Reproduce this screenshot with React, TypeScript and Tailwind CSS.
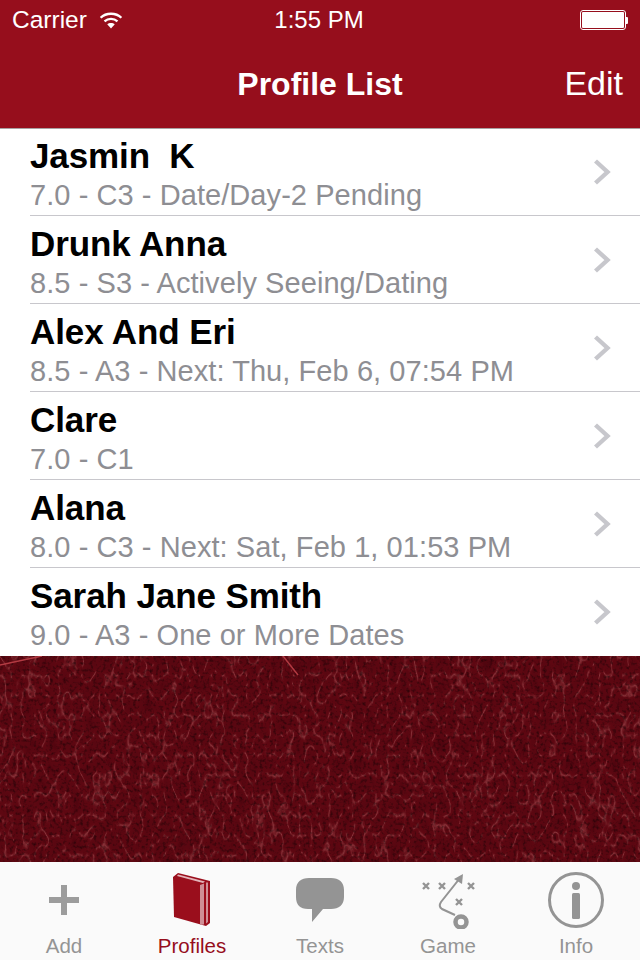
const profiles = [
  { name: 'Jasmin\u00a0\u00a0K', detail: '7.0 - C3 - Date/Day-2 Pending' },
  { name: 'Drunk Anna', detail: '8.5 - S3 - Actively Seeing/Dating' },
  { name: 'Alex And Eri', detail: '8.5 - A3 - Next: Thu, Feb 6, 07:54 PM' },
  { name: 'Clare', detail: '7.0 - C1' },
  { name: 'Alana', detail: '8.0 - C3 - Next: Sat, Feb 1, 01:53 PM' },
  { name: 'Sarah Jane Smith', detail: '9.0 - A3 - One or More Dates' },
];

const Wifi = () => (
  <svg width="24" height="18" viewBox="0 0 26 20" fill="none" stroke="white">
    <path d="M1.5 7.5C7.5 1.6 18.5 1.6 24.5 7.5" strokeWidth="2.6" />
    <path d="M5.8 11.4C9.8 7.8 16.2 7.8 20.2 11.4" strokeWidth="2.6" />
    <path d="M13 19.5L8.8 14.8C11 13 15 13 17.2 14.8Z" fill="white" stroke="none" />
  </svg>
);

const Battery = () => (
  <div className="flex items-center">
    <div className="w-[46px] h-[20px] rounded-[3px] border border-white p-[1px] flex">
      <div className="flex-1 bg-white rounded-[1px]" />
    </div>
    <div className="w-[2px] h-[7px] bg-white rounded-r-[1px]" />
  </div>
);

const Chevron = () => (
  <svg width="18" height="26" viewBox="0 0 18 26" fill="none" stroke="#c7c7cc" strokeWidth="4.4">
    <path d="M2.5 2L14.5 13L2.5 24" />
  </svg>
);

const Leather = () => (
  <svg width="640" height="206" className="block">
    <defs>
      <filter id="leather" x="0" y="0" width="100%" height="100%" colorInterpolationFilters="sRGB">
        <feTurbulence type="turbulence" baseFrequency="0.085 0.05" numOctaves="2" seed="7" />
        <feColorMatrix
          type="matrix"
          values="0 0 0 1 0
                  0 0 0 1 0
                  0 0 0 1 0
                  0 0 0 0 1"
        />
        <feComponentTransfer result="veins">
          <feFuncR type="table" tableValues="0.54 0.46 0.39 0.37 0.37 0.36 0.36 0.35 0.35 0.34 0.33 0.32 0.31 0.30 0.30 0.30" />
          <feFuncG type="table" tableValues="0.20 0.12 0.05 0.03 0.03 0.03 0.03 0.03 0.03 0.02 0.02 0.02 0.02 0.02 0.02 0.02" />
          <feFuncB type="table" tableValues="0.23 0.15 0.09 0.07 0.07 0.07 0.07 0.07 0.07 0.06 0.06 0.06 0.06 0.06 0.06 0.06" />
        </feComponentTransfer>
        <feTurbulence type="fractalNoise" baseFrequency="0.3" numOctaves="2" seed="3" />
        <feColorMatrix
          type="matrix"
          values="1.2 0 0 0 0.38
                  1.2 0 0 0 0.38
                  1.2 0 0 0 0.38
                  0 0 0 0 1"
          result="grain"
        />
        <feBlend in="veins" in2="grain" mode="multiply" />
      </filter>
    </defs>
    <rect width="640" height="206" filter="url(#leather)" />
    <path d="M0 9L42 0" stroke="#b33a42" strokeWidth="1.5" />
    <path d="M283 0L298 19" stroke="#b33a42" strokeWidth="1.5" />
  </svg>
);

const BookIcon = () => (
  <svg width="38" height="54" viewBox="0 0 38 54">
    <path d="M0 4L5 0L37 8V50L33 53L1 44Z" fill="#9a0e1c" />
    <path d="M4 3L5 1.5L32 8.5L30 10Z" fill="#e3b4b9" />
    <path d="M27 12L31 10.5V51.5L27 52Z" fill="#cf8f96" />
    <path d="M33 9.5H35V49L33 50.5Z" fill="#cf8f96" />
  </svg>
);

const BubbleIcon = () => (
  <svg width="50" height="46" viewBox="0 0 50 46">
    <path
      d="M14 1H36C44 1 49 5 49 13V20C49 28 44 32 36 32H28L17 45V32H13C5 32 1 28 1 20V13C1 5 6 1 14 1Z"
      fill="#949494"
    />
  </svg>
);

const PlayIcon = () => (
  <svg width="58" height="58" viewBox="0 0 58 58" fill="none" stroke="#949494">
    <g strokeWidth="2.4">
      <path d="M4 12L10 18M10 12L4 18" />
      <path d="M20 12L26 18M26 12L20 18" />
      <path d="M49 12L55 18M55 12L49 18" />
      <path d="M37 28L43 34M43 28L37 34" />
    </g>
    <path d="M41 7L22 31C20 34 20 36 23 38L36 44" strokeWidth="2" />
    <path d="M44 3L43 13L35 8Z" fill="#949494" stroke="none" />
    <circle cx="42" cy="51" r="5.5" strokeWidth="4.5" />
  </svg>
);

const InfoIcon = () => (
  <svg width="56" height="56" viewBox="0 0 56 56" fill="none" stroke="#949494">
    <circle cx="28" cy="28" r="26.5" strokeWidth="3" />
    <circle cx="28" cy="14" r="4" fill="#949494" stroke="none" />
    <rect x="24" y="21" width="8" height="26" rx="1.5" fill="#949494" stroke="none" />
  </svg>
);

const tabs = [
  {
    label: 'Add',
    icon: (
      <svg width="30" height="30" viewBox="0 0 30 30">
        <path d="M12 0H18V12H30V18H18V30H12V18H0V12H12Z" fill="#9c9c9c" />
      </svg>
    ),
  },
  { label: 'Profiles', icon: <BookIcon />, active: true },
  { label: 'Texts', icon: <BubbleIcon /> },
  { label: 'Game', icon: <PlayIcon /> },
  { label: 'Info', icon: <InfoIcon /> },
];

export default function App() {
  return (
    <div className="w-[640px] h-[960px] flex flex-col bg-white overflow-hidden font-['Liberation_Sans',Arial,sans-serif]">
      {/* Header */}
      <header className="h-[128px] shrink-0 bg-[#960e1c] text-white">
        <div className="h-[40px] px-3 relative flex items-center justify-between">
          <div className="flex items-center gap-[12px] text-[24.5px] font-light">
            <span>Carrier</span>
            <Wifi />
          </div>
          <Battery />
          <span className="absolute inset-0 flex items-center justify-center text-[24px] pr-[2px]">1:55 PM</span>
        </div>
        <div className="h-[88px] pb-[1px] relative flex items-center justify-end pr-[17px]">
          <span className="absolute inset-0 flex items-center justify-center text-[32px] font-bold pb-[1px]">Profile List</span>
          <span className="text-[34px] relative">Edit</span>
        </div>
      </header>

      {/* Rows */}
      <ul className="shrink-0">
        {profiles.map((p, i) => (
          <li key={p.name} className={`h-[88px] pl-[30px] ${i === 0 ? 'border-t border-[#a9a0a2]' : ''}`}>
            <div
              className={`h-full pr-[29px] flex items-center justify-between border-b ${
                i < profiles.length - 1 ? 'border-[#c8c7cc]' : 'border-transparent'
              }`}
            >
              <div className={i === 0 ? 'pt-[2px]' : 'pt-[3px]'}>
                <div className="text-[35px] leading-[42px] font-bold text-black tracking-[-0.1px] h-[44px]">{p.name}</div>
                <div className="text-[29px] leading-[32px] text-[#8e8e93] tracking-[0.07px]">{p.detail}</div>
              </div>
              <Chevron />
            </div>
          </li>
        ))}
      </ul>

      <div className="h-[206px] shrink-0 bg-[#4f0610]">
        <Leather />
      </div>

      {/* Tab bar */}
      <nav className="h-[98px] shrink-0 grid grid-cols-5 bg-[#fafafa]">
        {tabs.map((t) => (
          <div key={t.label} className="flex flex-col items-center pt-[2px]">
            <div className="h-[72px] flex items-center justify-center">{t.icon}</div>
            <span className={`text-[20.5px] leading-[20px] ${t.active ? 'text-[#960e1c]' : 'text-[#949494]'}`}>{t.label}</span>
          </div>
        ))}
      </nav>
    </div>
  );
}
